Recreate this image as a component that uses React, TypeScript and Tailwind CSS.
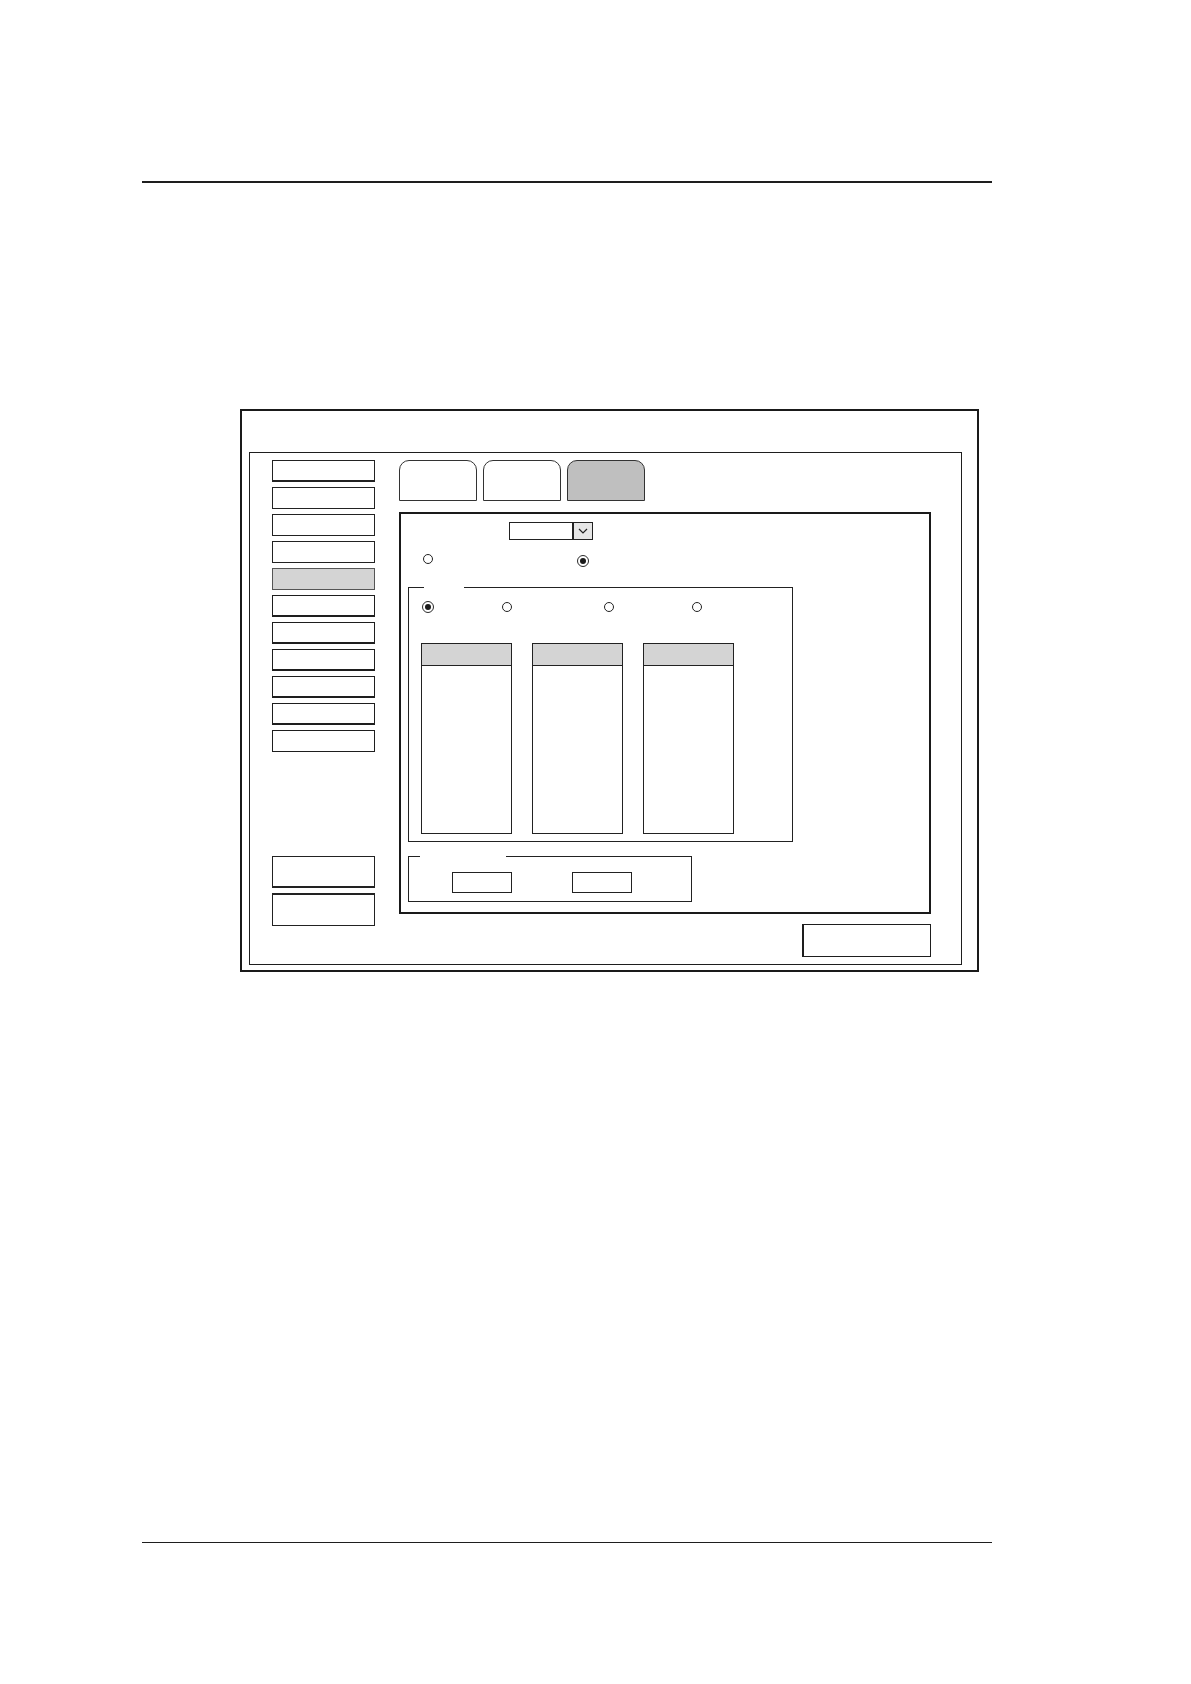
import React from "react";

function Radio({ selected }: { selected?: boolean }) {
  if (selected) {
    return (
      <div className="w-[12px] h-[12px] rounded-full border-[1.5px] border-[#2a2a2a] bg-white flex items-center justify-center shrink-0">
        <div className="w-[6px] h-[6px] rounded-full bg-[#1a1a1a]" />
      </div>
    );
  }
  return <div className="w-[10px] h-[10px] rounded-full border border-[#222] bg-white shrink-0" />;
}

function ListBox() {
  return (
    <div className="w-[91px] h-[191px] border border-[#222] flex flex-col">
      <div className="h-[22px] bg-[#d4d4d4] border-b border-[#222]" />
      <div className="flex-1 bg-white" />
    </div>
  );
}

export default function App() {
  return (
    <div className="relative w-[1191px] h-[1684px] bg-white overflow-hidden pt-[181px]">
      {/* top rule */}
      <div className="ml-[142px] w-[850px] h-[1.5px] bg-[#1e1e1e]" />

      {/* outer dialog */}
      <div className="ml-[240px] mt-[226px] w-[739px] h-[563px] border-2 border-[#1a1a1a] pt-[41px] pl-[7px] pr-[15px] pb-[5px]">
        <div className="w-full h-full border-[1.5px] border-[#1e1e1e] flex pl-[21.5px] pt-[7.5px]">
          {/* sidebar */}
          <div className="w-[103px] flex flex-col">
            <div className="flex flex-col gap-[5px]">
              <div className="h-[22px] border border-[#222] border-b-2 bg-white" />
              <div className="h-[22px] border border-[#222] bg-white" />
              <div className="h-[22px] border border-[#222] bg-white" />
              <div className="h-[22px] border border-[#222] bg-white" />
              <div className="h-[22px] border border-[#555] bg-[#d4d4d4]" />
              <div className="h-[22px] border-[1.5px] border-[#1e1e1e] border-b-2 bg-white" />
              <div className="h-[22px] border-[1.5px] border-[#1e1e1e] border-b-2 bg-white" />
              <div className="h-[22px] border-[1.5px] border-[#1e1e1e] border-b-2 bg-white" />
              <div className="h-[22px] border-[1.5px] border-[#1e1e1e] border-b-2 bg-white" />
              <div className="h-[22px] border-[1.5px] border-[#1e1e1e] border-b-2 bg-white" />
              <div className="h-[22px] border-[1.5px] border-[#1e1e1e] bg-white" />
            </div>
            <div className="mt-[104px] flex flex-col gap-[5px]">
              <div className="h-[32px] border border-[#222] border-b-2 bg-white" />
              <div className="h-[33px] border border-[#222] border-t-2 bg-white" />
            </div>
          </div>

          {/* right column */}
          <div className="ml-[24px] w-[532px] flex flex-col">
            {/* tabs */}
            <div className="flex gap-[6px] -mt-[0.5px]">
              <div className="w-[78px] h-[41px] rounded-t-[10px] border-[1.5px] border-[#333] bg-white" />
              <div className="w-[78px] h-[41px] rounded-t-[10px] border-[1.5px] border-[#333] bg-white" />
              <div className="w-[78px] h-[41px] rounded-t-[10px] border-[1.5px] border-[#333] bg-[#bfbfbf]" />
            </div>

            {/* main panel */}
            <div className="mt-[11.5px] w-[532px] h-[402px] border-2 border-[#1a1a1a] flex flex-col">
              {/* dropdown */}
              <div className="ml-[108px] mt-[8px] w-[84px] h-[18px] border border-[#222] flex">
                <div className="flex-1 bg-white" />
                <div className="w-[20px] border-l-2 border-[#222] bg-[#e6e6e6] flex items-center justify-center">
                  <svg width="10" height="6" viewBox="0 0 10 6">
                    <path d="M1 1 L5 5 L9 1" fill="none" stroke="#222" strokeWidth="1.2" />
                  </svg>
                </div>
              </div>

              {/* radio row */}
              <div className="mt-[14px] h-[20px] flex items-start">
                <div className="ml-[22px]">
                  <Radio />
                </div>
                <div className="ml-[144px] mt-[1px]">
                  <Radio selected />
                </div>
              </div>

              {/* group box 1 */}
              <div className="ml-[7px] mt-[13px] w-[385px] h-[255px] flex flex-col border-l border-r border-b border-[#222]">
                <div className="flex h-px shrink-0">
                  <div className="w-[15px] bg-[#222]" />
                  <div className="w-[40px]" />
                  <div className="flex-1 bg-[#222]" />
                </div>
                <div className="mt-[13px] h-[12px] flex items-center">
                  <div className="ml-[13px]">
                    <Radio selected />
                  </div>
                  <div className="ml-[68px]">
                    <Radio />
                  </div>
                  <div className="ml-[92px]">
                    <Radio />
                  </div>
                  <div className="ml-[78px]">
                    <Radio />
                  </div>
                </div>
                <div className="mt-[30px] ml-[12px] flex gap-[20px]">
                  <ListBox />
                  <ListBox />
                  <ListBox />
                </div>
              </div>

              {/* group box 2 */}
              <div className="ml-[7px] mt-[14px] w-[284px] h-[46px] flex flex-col border-l border-r border-b border-[#222]">
                <div className="flex h-px shrink-0">
                  <div className="w-[11px] bg-[#222]" />
                  <div className="w-[86px]" />
                  <div className="flex-1 bg-[#222]" />
                </div>
                <div className="mt-[15px] ml-[43px] flex gap-[60px]">
                  <div className="w-[60px] h-[21px] border border-[#222] bg-white" />
                  <div className="w-[60px] h-[21px] border border-[#222] bg-white" />
                </div>
              </div>
            </div>

            {/* bottom-right button */}
            <div className="mt-[10px] ml-auto w-[129px] h-[33px] border-[1.5px] border-[#1e1e1e] border-l-2 bg-white" />
          </div>
        </div>
      </div>

      {/* bottom rule */}
      <div className="ml-[142px] mt-[570px] w-[850px] h-[1.5px] bg-[#1e1e1e]" />
    </div>
  );
}
